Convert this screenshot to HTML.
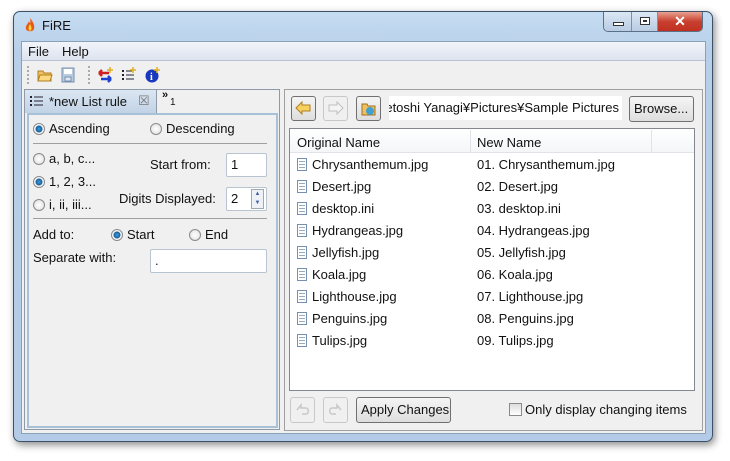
<!DOCTYPE html>
<html><head><meta charset="utf-8"><style>
*{margin:0;padding:0;box-sizing:border-box}
body{width:730px;height:461px;background:#fff;font-family:"Liberation Sans",sans-serif;font-size:13px;color:#111;position:relative;overflow:hidden}
.a{position:absolute}
.win{left:13px;top:11px;width:700px;height:431px;border:1px solid #3c5068;border-radius:7px;background:linear-gradient(#c5dcf2,#b7cfe8 40px,#b3cbe6);box-shadow:2px 3px 8px rgba(0,0,0,.45)}
.client{left:21px;top:41px;width:685px;height:393px;background:#f0f0f0;border:1px solid #8aa0b8}
.t{white-space:nowrap}
.radio{width:12px;height:12px;border-radius:50%;border:1px solid #8a8a8a;background:radial-gradient(#fff,#ddd)}
.radio.on{background:radial-gradient(#3aa0e0 0,#1a5f9a 3px,#fff 4px,#e8e8e8 6px)}
.inp{background:#fff;border:1px solid #b8c4d0;border-radius:2px}
.btn{border:1px solid #707070;border-radius:3px;background:linear-gradient(#f4f4f4,#dedede)}
.doc{width:10px;height:13px;border:1px solid #7890b0;background:repeating-linear-gradient(#fff 0 2px,#9ab 2px 3px);background-clip:content-box;padding:2px 1px}
</style></head><body>
<div class="a win"></div>
<svg class="a" style="left:25px;top:18px" width="10" height="15"><path d="M5 0C8 4 10 7 9 11 8 14 2 14 1 11 0 8 3 6 4 3 5 6 6 7 5 0Z" fill="#e85a10"/><path d="M5 6C7 9 7 12 5 13 3 12 3 9 5 6Z" fill="#ffd040"/></svg>
<div class="a t" style="left:42px;top:18px;font-size:13px">FiRE</div>
<div class="a" style="left:603px;top:12px;width:100px;height:20px;border:1px solid #5a6f88;border-top:none;border-radius:0 0 5px 5px;overflow:hidden;display:flex">
<div style="width:28px;background:linear-gradient(#dbe7f4,#b9cce2);border-right:1px solid #7d90a8;position:relative"><div class="a" style="left:9px;top:10px;width:11px;height:4px;border:1px solid #333;background:#fff"></div></div>
<div style="width:26px;background:linear-gradient(#dbe7f4,#b9cce2);border-right:1px solid #7d90a8;position:relative"><div class="a" style="left:8px;top:5px;width:10px;height:8px;border:1px solid #333;background:#fff"><div style="margin:2px;height:2px;border:1px solid #333"></div></div></div>
<div style="flex:1;background:linear-gradient(#e9a090,#c84030 50%,#c03020);color:#fff;font-weight:bold;font-size:14px;text-align:center;line-height:18px">✕</div></div>
<div class="a client"></div>
<div class="a" style="left:22px;top:42px;width:683px;height:19px;background:linear-gradient(#f2f4fa,#dde3ef);border-bottom:1px solid #b8c2d4"></div>
<div class="a t" style="left:28px;top:44px">File</div><div class="a t" style="left:62px;top:44px">Help</div>
<div class="a" style="left:27px;top:66px;height:18px;border-left:2px dotted #aaa"></div>
<div class="a" style="left:88px;top:66px;height:18px;border-left:2px dotted #aaa"></div>
<svg class="a" style="left:37px;top:68px" width="16" height="14"><path d="M1 3h5l1 2h7v8H1z" fill="#f0c060" stroke="#b08020"/><path d="M3 7h12l-2 6H1z" fill="#fcd880" stroke="#b08020"/></svg>
<svg class="a" style="left:61px;top:67px" width="14" height="16"><rect x="1" y="1" width="12" height="14" fill="#b8cce0" stroke="#7890b0"/><rect x="3" y="2" width="8" height="5" fill="#fff"/><rect x="4" y="10" width="6" height="4" fill="#e0e8f0" stroke="#7890b0"/></svg>
<svg class="a" style="left:97px;top:67px" width="17" height="16"><path d="M2 6h10M2 6l3-3M2 6l3 3" stroke="#d02020" stroke-width="2.5" fill="none"/><path d="M14 12H4M14 12l-3-3M14 12l-3 3" stroke="#2040d0" stroke-width="2.5" fill="none"/><path d="M13 0v6M10 3h6" stroke="#e0b020" stroke-width="1.5"/></svg>
<svg class="a" style="left:121px;top:67px" width="16" height="16"><g fill="#223"><rect x="1" y="3" width="2" height="2"/><rect x="1" y="7" width="2" height="2"/><rect x="1" y="11" width="2" height="2"/></g><g stroke="#223"><path d="M5 4h6M5 8h8M5 12h8"/></g><path d="M12 0v6M9 3h6" stroke="#e0b020" stroke-width="1.5"/></svg>
<svg class="a" style="left:145px;top:67px" width="16" height="16"><circle cx="7" cy="9" r="6.5" fill="#1838c0"/><text x="5" y="13" fill="#fff" font-size="10" font-weight="bold" font-family="Liberation Serif">i</text><path d="M12 0v6M9 3h6" stroke="#e0b020" stroke-width="1.5"/></svg>
<!-- left panel -->
<div class="a" style="left:24px;top:89px;width:256px;height:341px;border:1px solid #8e9aa8;background:#f0f0f0"></div>
<div class="a" style="left:25px;top:90px;width:132px;height:23px;background:linear-gradient(#dbe6f2,#c2d3e6);border-right:1px solid #8e9aa8"></div>
<svg class="a" style="left:30px;top:95px" width="13" height="12"><g fill="#223"><rect x="0" y="1" width="2" height="2"/><rect x="0" y="5" width="2" height="2"/><rect x="0" y="9" width="2" height="2"/></g><path d="M4 2h9M4 6h9M4 10h9" stroke="#223"/></svg>
<div class="a t" style="left:49px;top:94px">*new List rule</div>
<div class="a t" style="left:138px;top:93px;color:#777;font-size:13px">☒</div>
<div class="a t" style="left:162px;top:89px;font-size:11px;font-weight:bold">»</div><div class="a t" style="left:170px;top:97px;font-size:10px">1</div>
<div class="a" style="left:27px;top:113px;width:251px;height:315px;border:2px solid #a8c0d8;background:#f0f0f0"></div>
<div class="a radio on" style="left:33px;top:123px"></div><div class="a t" style="left:49px;top:121px">Ascending</div>
<div class="a radio" style="left:150px;top:123px"></div><div class="a t" style="left:166px;top:121px">Descending</div>
<div class="a" style="left:33px;top:143px;width:234px;border-top:1px solid #a0a0a0"></div>
<div class="a radio" style="left:33px;top:153px"></div><div class="a t" style="left:49px;top:151px">a, b, c...</div>
<div class="a radio on" style="left:33px;top:176px"></div><div class="a t" style="left:49px;top:174px">1, 2, 3...</div>
<div class="a radio" style="left:33px;top:199px"></div><div class="a t" style="left:49px;top:197px">i, ii, iii...</div>
<div class="a t" style="left:150px;top:157px">Start from:</div>
<div class="a inp" style="left:226px;top:153px;width:41px;height:24px"></div><div class="a t" style="left:231px;top:157px">1</div>
<div class="a t" style="left:119px;top:191px">Digits Displayed:</div>
<div class="a inp" style="left:226px;top:187px;width:41px;height:24px"></div><div class="a t" style="left:231px;top:191px">2</div>
<div class="a" style="left:251px;top:189px;width:13px;height:20px;border:1px solid #a0a8b0;background:#eef2f6;font-size:6px;color:#4060a0;text-align:center;line-height:9px">▲<br>▼</div>
<div class="a" style="left:33px;top:218px;width:234px;border-top:1px solid #a0a0a0"></div>
<div class="a t" style="left:33px;top:227px">Add to:</div>
<div class="a radio on" style="left:111px;top:229px"></div><div class="a t" style="left:127px;top:227px">Start</div>
<div class="a radio" style="left:189px;top:229px"></div><div class="a t" style="left:205px;top:227px">End</div>
<div class="a t" style="left:33px;top:250px">Separate with:</div>
<div class="a inp" style="left:150px;top:249px;width:117px;height:24px"></div><div class="a t" style="left:155px;top:253px">.</div>
<!-- right panel -->
<div class="a" style="left:284px;top:89px;width:419px;height:342px;border:1px solid #a0a0a0;background:#f0f0f0"></div>
<div class="a btn" style="left:291px;top:96px;width:25px;height:25px"></div>
<svg class="a" style="left:295px;top:101px" width="17" height="14"><path d="M1 7L7 1v3h8v6H7v3z" fill="#f8d060" stroke="#b08020"/></svg>
<div class="a" style="left:323px;top:96px;width:25px;height:25px;border:1px solid #c8c8c8;border-radius:3px"></div>
<svg class="a" style="left:327px;top:101px" width="17" height="14"><path d="M16 7L10 1v3H2v6h8v3z" fill="#f4f4f4" stroke="#c0c0c0"/></svg>
<div class="a btn" style="left:356px;top:96px;width:25px;height:25px"></div>
<svg class="a" style="left:361px;top:101px" width="16" height="15"><path d="M1 3h5l1 2h7v9H1z" fill="#f0c060" stroke="#a07020"/><circle cx="9" cy="10" r="4" fill="#40a0d0"/></svg>
<div class="a" style="left:389px;top:96px;width:233px;height:24px;background:#fff;overflow:hidden"><div class="t" style="position:absolute;right:3px;top:4px">Hidetoshi Yanagi¥Pictures¥Sample Pictures</div></div>
<div class="a btn" style="left:629px;top:96px;width:65px;height:26px"></div><div class="a t" style="left:634px;top:101px">Browse...</div>
<div class="a" style="left:289px;top:128px;width:406px;height:263px;border:1px solid #828790;background:#fff"></div>
<div class="a" style="left:290px;top:129px;width:404px;height:24px;background:linear-gradient(#fff,#f4f6f8);border-bottom:1px solid #e0e4e8"></div>
<div class="a" style="left:470px;top:130px;height:22px;border-left:1px solid #e0e4e8"></div>
<div class="a" style="left:651px;top:130px;height:22px;border-left:1px solid #e0e4e8"></div>
<div class="a t" style="left:297px;top:135px">Original Name</div><div class="a t" style="left:477px;top:135px">New Name</div>
<div class="a" style="left:297px;top:154px;line-height:22px">
<div><span class="doc" style="display:inline-block;vertical-align:-2px;margin-right:5px"></span>Chrysanthemum.jpg</div>
<div><span class="doc" style="display:inline-block;vertical-align:-2px;margin-right:5px"></span>Desert.jpg</div>
<div><span class="doc" style="display:inline-block;vertical-align:-2px;margin-right:5px"></span>desktop.ini</div>
<div><span class="doc" style="display:inline-block;vertical-align:-2px;margin-right:5px"></span>Hydrangeas.jpg</div>
<div><span class="doc" style="display:inline-block;vertical-align:-2px;margin-right:5px"></span>Jellyfish.jpg</div>
<div><span class="doc" style="display:inline-block;vertical-align:-2px;margin-right:5px"></span>Koala.jpg</div>
<div><span class="doc" style="display:inline-block;vertical-align:-2px;margin-right:5px"></span>Lighthouse.jpg</div>
<div><span class="doc" style="display:inline-block;vertical-align:-2px;margin-right:5px"></span>Penguins.jpg</div>
<div><span class="doc" style="display:inline-block;vertical-align:-2px;margin-right:5px"></span>Tulips.jpg</div></div>
<div class="a t" style="left:477px;top:154px;line-height:22px">01. Chrysanthemum.jpg<br>02. Desert.jpg<br>03. desktop.ini<br>04. Hydrangeas.jpg<br>05. Jellyfish.jpg<br>06. Koala.jpg<br>07. Lighthouse.jpg<br>08. Penguins.jpg<br>09. Tulips.jpg</div>
<div class="a" style="left:290px;top:397px;width:25px;height:26px;border:1px solid #c8c8c8;border-radius:3px"></div>
<svg class="a" style="left:294px;top:402px" width="17" height="15"><path d="M3 8l4-5v3h5c3 0 3 6 0 6H8" fill="none" stroke="#c8c8c8" stroke-width="1.5"/></svg>
<div class="a" style="left:323px;top:397px;width:25px;height:26px;border:1px solid #c8c8c8;border-radius:3px"></div>
<svg class="a" style="left:327px;top:402px" width="17" height="15"><path d="M14 8l-4-5v3H5c-3 0-3 6 0 6h4" fill="none" stroke="#c8c8c8" stroke-width="1.5"/></svg>
<div class="a btn" style="left:356px;top:397px;width:95px;height:26px"></div><div class="a t" style="left:361px;top:402px">Apply Changes</div>
<div class="a" style="left:509px;top:403px;width:13px;height:13px;border:1px solid #8a8a8a;background:linear-gradient(#ddd,#fff)"></div>
<div class="a t" style="left:525px;top:402px">Only display changing items</div>
</body></html>
